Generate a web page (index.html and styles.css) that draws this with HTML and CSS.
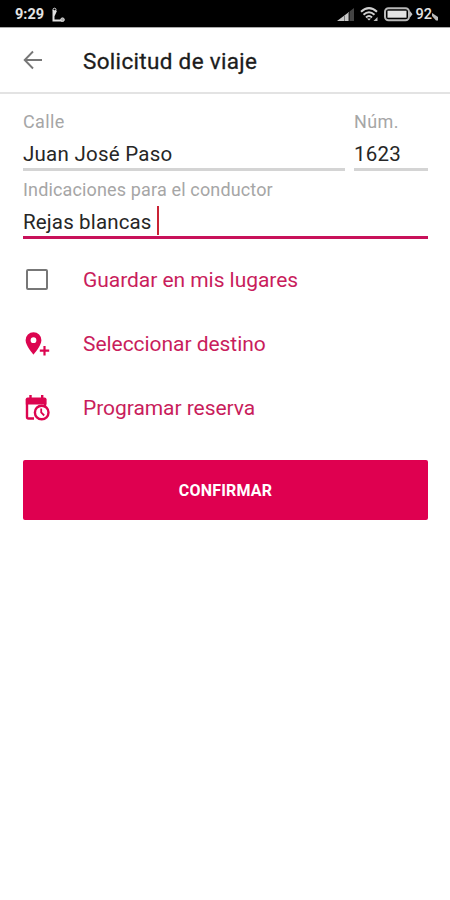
FILE: index.html
```html
<!DOCTYPE html>
<html lang="es">
<head>
<meta charset="utf-8">
<title>Solicitud de viaje</title>
<link rel="stylesheet" href="styles.css">
</head>
<body>
<div class="status">
  <span class="time">9:29</span>
  <svg class="trip" width="16" height="16" viewBox="0 0 16 16" fill="none" stroke="#e0e0e0"><path d="M3.500 3v10.500H12M6 3.500 3.500 9v4" stroke-width="2"/><circle cx="4.500" cy="2.700" r="1.500"/><circle cx="12.500" cy="12.700" r="1.800" fill="#aaa"/></svg>
  <div class="indicators">
    <svg width="18" height="14" viewBox="0 0 18 14"><path d="M0 13 12 4v9z" fill="#c8c8c8"/><path d="M12.500 3.500 17 0v13h-4.500z" fill="#444"/><path d="M7.500 7v6M11.500 4v9" stroke="#777"/></svg>
    <svg class="wifi" width="19" height="15" viewBox="0 0 19 15" fill="none" stroke="#d0d0d0" stroke-width="2"><path d="M1 4.800Q9-2.500 17 4.800M3.500 7.800q5.500-5 11 0M6 10.500q3-3 6 0"/><path d="m7 11.500 2 2 2-2z" fill="#d6d6d6" stroke="none"/><path d="M13.500 14 17.500 10v4z" fill="#bbb" stroke="none"/></svg>
    <svg class="battery" width="29" height="15" viewBox="0 0 29 15"><rect x="1" y="1.200" width="24" height="12" rx="3.500" fill="none" stroke="#b8b8b8" stroke-width="2"/><rect x="3.500" y="3.700" width="19" height="7" fill="#e2e2e2"/><path d="M26 4 28.500 7.200 26 10.500z" fill="#c4c4c4"/></svg>
    <span class="percent">92</span>
    <svg width="7" height="8" viewBox="0 0 7 8"><path d="M0 0 6 4v3.500H4L0 3z" fill="#bbb"/></svg>
  </div>
</div>
<header class="bar">
  <svg class="back" width="20" height="20" viewBox="0 0 20 20" fill="none" stroke="#777" stroke-width="1.900"><path d="M19 10H2M10 1.500 1.700 10 10 18.500"/></svg>
  <h1>Solicitud de viaje</h1>
</header>
<main>
  <div class="fields">
    <div class="field street"><label>Calle</label><div class="value"><span>Juan José Paso</span></div></div>
    <div class="field number"><label>Núm.</label><div class="value"><span>1623</span></div></div>
  </div>
  <div class="field active"><label>Indicaciones para el conductor</label><div class="value"><span>Rejas blancas</span><i class="caret"></i></div></div>
  <div class="actions">
    <div class="action save"><span class="icon"><i class="box"></i></span><span>Guardar en mis lugares</span></div>
    <div class="action"><span class="icon"><svg width="27" height="26" viewBox="0 0 27 26"><path fill="#dc0550" fill-rule="evenodd" d="M10.500 1.300A7.900 7.900 0 0 0 2.600 9.200c0 5.500 7.900 14.300 7.900 14.300s7.900-8.800 7.900-14.300A7.900 7.900 0 0 0 10.500 1.300zm0 5a2.900 2.900 0 1 1 0 5.800 2.900 2.900 0 0 1 0-5.800z"/><path d="M21.500 15v9.400M16.800 19.700h9.400" stroke="#dc0550" stroke-width="2.200"/></svg></span><span>Seleccionar destino</span></div>
    <div class="action"><span class="icon"><svg class="calendar" width="27" height="26" viewBox="0 0 27 26" fill="none" stroke="#dc0550"><path d="M11 23.500H5.500Q4 23.500 4 22V5h18v8" stroke-width="2.400"/><path d="M4.500 2.500h17q2 0 2 2v5H2.800v-5q0-2 1.700-2z" fill="#dc0550" stroke="none"/><path d="M7.500 0v5M19.200 0v5" stroke-width="2.400"/><circle cx="18.700" cy="17.500" r="6.800" fill="#fff" stroke-width="2.400"/><path d="M18.200 13.500v4l3 3" stroke-width="1.800"/></svg></span><span>Programar reserva</span></div>
  </div>
  <button class="confirm">CONFIRMAR</button>
</main>
</body>
</html>
```
FILE: styles.css
```css
* { box-sizing: border-box; }
body { margin: 0; background: #fff; font-family: Roboto, sans-serif; min-height: 900px; }
svg { display: block; flex: none; }
.status { height: 27px; background: #000; color: #e4e4e4; display: flex; align-items: center; padding: 2px 11px 0 15px; font-weight: 700; font-size: 14.5px; }
.time { width: 30px; }
.trip { margin-left: 5px; }
.indicators { margin-left: auto; display: flex; align-items: center; }
.wifi { margin-left: 5px; }
.battery { margin-left: 5px; }
.percent { margin-left: 3px; font-weight: 500; font-size: 14.5px; }
.indicators svg:last-child { margin-top: 4px; }
.bar { height: 67px; border-bottom: 2px solid #e3e3e3; border-top: 1px solid #aaa; display: flex; align-items: center; padding-left: 23px; }
h1 { margin: 1px 0 0 40px; font-size: 22.5px; font-weight: 400; line-height: 30px; color: #1c1c1c; -webkit-text-stroke: .3px #1c1c1c; white-space: nowrap; letter-spacing: .32px; }
main { padding: 15px 22px 0 23px; }
.fields { display: flex; gap: 9px; }
.street { flex: 1; }
.number { width: 74px; }
.field { height: 68px; }
.field label { display: block; height: 24px; line-height: 25px; font-size: 18px; color: #a6a6a6; white-space: nowrap; letter-spacing: .4px; }
.field.active label { letter-spacing: .15px; }
.value { height: 38px; padding-top: 7px; border-bottom: 3px solid #d4d4d4; display: flex; align-items: center; font-size: 20.5px; line-height: 28px; color: #262626; white-space: nowrap; letter-spacing: .25px; }
.active .value { border-bottom-color: #c8115a; letter-spacing: .15px; }
.caret { width: 2px; height: 29px; background: #c92335; margin: -3px 0 0 5px; }
.actions { padding-top: 3px; }
.action { height: 64px; display: flex; align-items: center; font-size: 21px; color: #c91d5c; white-space: nowrap; letter-spacing: -.05px; }
.icon { width: 60px; display: flex; }
.box { width: 22px; height: 21px; border: 2px solid #777; border-radius: 2px; margin: -1px 0 0 3px; }
.calendar { margin-top: -1px; }
.confirm { display: block; width: 100%; height: 60px; margin: 20px 0 0; border: 0; border-radius: 2px; background: #df0050; color: #fff; font: 700 16px/58px Roboto, sans-serif; letter-spacing: .2px; padding: 2px 0 0; }
```
